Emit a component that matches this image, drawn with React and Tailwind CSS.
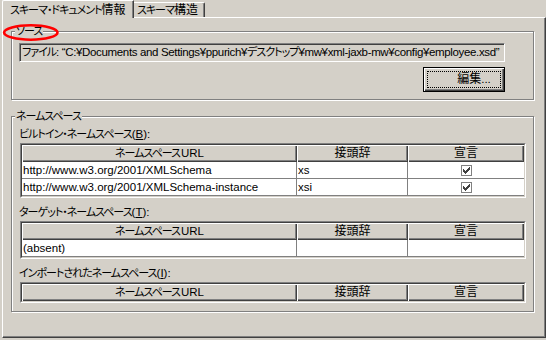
import React from "react";

const CHECK_PIXELS = [
  [6, 0],
  [5, 1], [6, 1],
  [0, 2], [4, 2], [5, 2], [6, 2],
  [0, 3], [1, 3], [3, 3], [4, 3], [5, 3],
  [0, 4], [1, 4], [2, 4], [3, 4], [4, 4],
  [1, 5], [2, 5], [3, 5],
  [2, 6],
];

function J({ children }) {
  return <span className="text-[11px] tracking-[-1px]">{children}</span>;
}

function K({ children }) {
  return <span className="text-[12px] tracking-[0px]">{children}</span>;
}

function CheckBox() {
  return (
    <svg width="11" height="11" viewBox="0 0 11 11" shapeRendering="crispEdges">
      <rect x="0.5" y="0.5" width="10" height="10" fill="#fff" stroke="#808080" />
      {CHECK_PIXELS.map(([x, y], i) => (
        <rect key={i} x={2 + x} y={2 + y} width="1" height="1" fill="#404040" />
      ))}
    </svg>
  );
}

function HeaderCell({ className, children }) {
  return (
    <div
      className={`${className} flex items-center justify-center pb-[1px] bg-[#d4d0c8] shadow-[inset_1px_1px_0_#fff,inset_-1px_-1px_0_#404040,inset_-2px_-2px_0_#808080] whitespace-nowrap`}
    >
      {children}
    </div>
  );
}

function NsTable({ rows }) {
  return (
    <div className="ml-[1px] w-[506px] border border-t-[#808080] border-l-[#808080] border-b-white border-r-white">
      <div className="border border-t-[#404040] border-l-[#404040] border-b-[#d4d0c8] border-r-[#d4d0c8] bg-white">
        <div className="flex h-[17px]">
          <HeaderCell className="w-[275px]">
            <J>ネームスペース</J>
            <span className="ml-[1px]">URL</span>
          </HeaderCell>
          <HeaderCell className="w-[111px]">
            <K>接頭辞</K>
          </HeaderCell>
          <HeaderCell className="w-[116px]">
            <K>宣言</K>
          </HeaderCell>
        </div>
        {rows.map((r, i) => (
          <div key={i} className="flex h-[17px] border-b border-[#808080]">
            <div className="w-[275px] border-r border-[#808080] pl-[1px] flex items-center whitespace-nowrap">
              {r.url}
            </div>
            <div className="w-[111px] border-r border-[#808080] pl-[1px] flex items-center">
              {r.prefix}
            </div>
            <div className="w-[116px] flex items-center justify-center">
              {r.declared ? <CheckBox /> : null}
            </div>
          </div>
        ))}
      </div>
    </div>
  );
}

function GroupBox({ label, className, children }) {
  return (
    <div
      className={`relative w-[523px] border border-[#808080] shadow-[inset_1px_1px_0_#fff,1px_1px_0_#fff] ${className}`}
    >
      <div className="absolute -top-[7px] left-[3px] px-[1px] bg-[#d4d0c8] leading-[13px]">
        {label}
      </div>
      {children}
    </div>
  );
}

export default function App() {
  return (
    <div className="relative w-[546px] h-[340px] overflow-hidden bg-[#d4d0c8] text-black text-[11.5px] leading-[13px] [font-family:'Liberation_Sans','Noto_Sans_CJK_JP',sans-serif] [font-feature-settings:'palt']">
      {/* tabs */}
      <div className="flex items-end h-[17px] pl-[2px]">
        <div className="relative z-10 -mb-[1px] h-[18px] w-[132px] bg-[#d4d0c8] border-l border-t border-white border-r border-r-[#404040] rounded-tl-[2px] shadow-[inset_-1px_0_0_#808080] pl-[7px] pt-[3px] whitespace-nowrap">
          <J>スキーマ・ドキュメント</J>
          <K>情報</K>
        </div>
        <div className="h-[15px] w-[71px] border-t border-white border-r border-r-[#404040] rounded-tr-[2px] shadow-[inset_-1px_0_0_#808080] pl-[3px] pt-[1px] whitespace-nowrap">
          <J>スキーマ</J>
          <K>構造</K>
        </div>
      </div>

      {/* panel */}
      <div className="ml-[2px] w-[544px] h-[321px] border border-t-white border-l-white border-r-[#404040] border-b-[#404040] shadow-[inset_-1px_-1px_0_#808080] pt-[13px] pl-[8px]">
        <GroupBox label={<J>ソース</J>} className="h-[69px]">
          <div className="pl-[7px] pt-[11px] w-[493px] flex flex-col">
            <div className="h-[19px] w-[486px] flex items-center border border-t-[#808080] border-l-[#808080] border-b-white border-r-white shadow-[inset_1px_1px_0_#404040] pl-[2px] whitespace-nowrap overflow-hidden tracking-[-0.35px]">
              <J>ファイル</J>: “C:¥Documents and Settings¥ppurich¥<J>デスクトップ</J>¥mw¥xml-jaxb-mw¥config¥employee.xsd”
            </div>
            <div className="self-end mt-[5px] w-[82px] h-[25px] border border-black shadow-[inset_1px_1px_0_#fff,inset_-1px_-1px_0_#404040,inset_-2px_-2px_0_#808080] p-[3px]">
              <div className="h-full w-full border border-dotted border-black flex items-center justify-center pl-[20px]">
                <K>編集</K>...
              </div>
            </div>
          </div>
        </GroupBox>

        <GroupBox label={<J>ネームスペース</J>} className="mt-[16px] h-[196px]">
          <div className="pl-[7px] pt-[11px] flex flex-col">
            <div className="h-[13px] mb-[2px] whitespace-nowrap">
              <J>ビルトイン・ネームスペース</J>(<span className="underline">B</span>):
            </div>
            <NsTable
              rows={[
                { url: "http://www.w3.org/2001/XMLSchema", prefix: "xs", declared: true },
                { url: "http://www.w3.org/2001/XMLSchema-instance", prefix: "xsi", declared: true },
              ]}
            />
            <div className="h-[13px] mt-[8px] mb-[2px] whitespace-nowrap">
              <J>ターゲット・ネームスペース</J>(<span className="underline">T</span>):
            </div>
            <NsTable rows={[{ url: "(absent)", prefix: "", declared: false }]} />
            <div className="h-[13px] mt-[8px] mb-[2px] whitespace-nowrap">
              <J>インポートされたネームスペース</J>(<span className="underline">I</span>):
            </div>
            <NsTable rows={[]} />
          </div>
        </GroupBox>
      </div>

      {/* red annotation ellipse */}
      <svg
        className="absolute left-0 top-0 pointer-events-none"
        width="546"
        height="60"
        viewBox="0 0 546 60"
      >
        <ellipse cx="30.8" cy="32.5" rx="26.7" ry="7.2" fill="none" stroke="#ff0000" strokeWidth="2.6" />
      </svg>
    </div>
  );
}
